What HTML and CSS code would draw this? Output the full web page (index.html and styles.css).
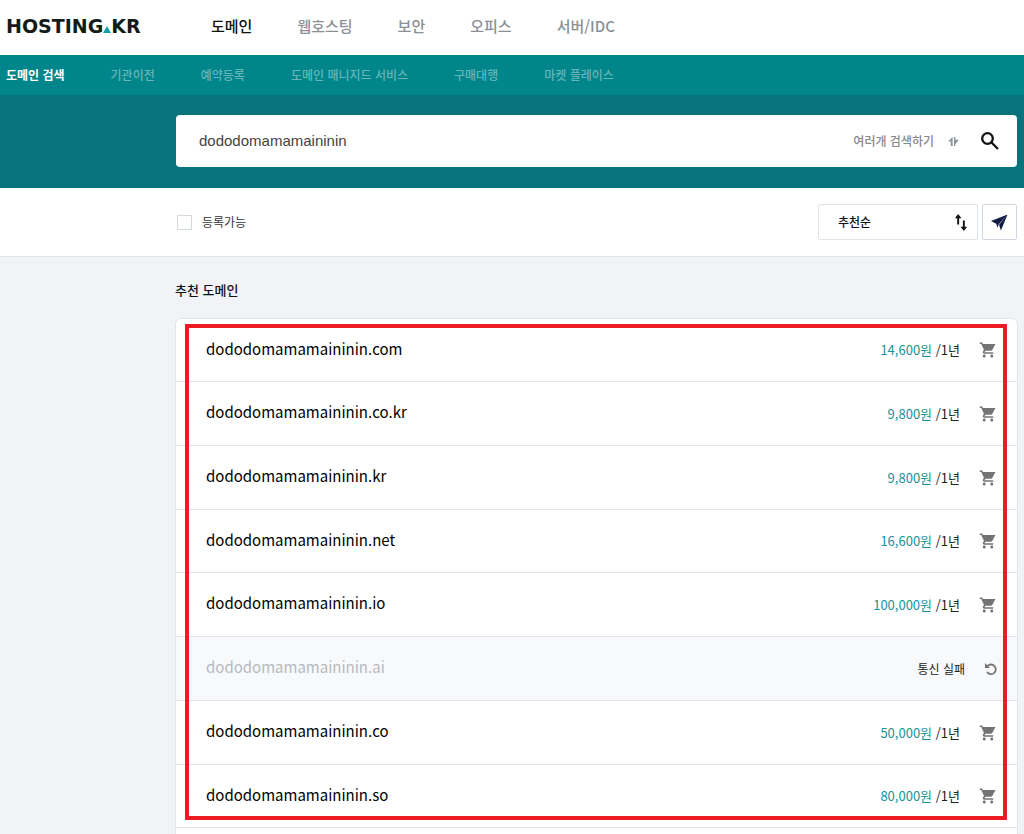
FILE: index.html
```html
<!DOCTYPE html>
<html lang="ko">
<head>
<meta charset="utf-8">
<title>HOSTING.KR</title>
<meta name="viewport" content="width=device-width, initial-scale=1">
<link rel="stylesheet" href="styles.css">
</head>
<body>
<svg class="sprite" aria-hidden="true">
  <symbol id="cart" viewBox="0 0 24 24"><path d="M7 18c-1.100 0-2 .9-2 2s.9 2 2 2 2-.9 2-2-.9-2-2-2zM1 2v2h2l3.600 7.600-1.400 2.400C4.500 15.400 5.500 17 7 17h12v-2H7.400l1.100-2h7.500c.8 0 1.400-.4 1.700-1l4.300-8H5.200l-.9-2zM17 18c-1.100 0-2 .9-2 2s.9 2 2 2 2-.9 2-2-.9-2-2-2z"/></symbol>
</svg>
<header class="header">
  <a class="logo" href="#" aria-label="HOSTING.KR"><span>HOSTING</span><svg class="logo-mark" viewBox="0 0 8 7"><path d="M4 0l4 7H0z"/></svg><span>KR</span></a>
  <nav class="main-nav">
    <a class="current" href="#">도메인</a>
    <a href="#">웹호스팅</a>
    <a href="#">보안</a>
    <a href="#">오피스</a>
    <a href="#">서버/IDC</a>
  </nav>
</header>
<nav class="sub-nav">
  <a class="current" href="#">도메인 검색</a>
  <a href="#">기관이전</a>
  <a href="#">예약등록</a>
  <a href="#">도메인 매니지드 서비스</a>
  <a href="#">구매대행</a>
  <a href="#">마켓 플레이스</a>
</nav>
<section class="search-band">
  <form class="search-box">
    <input class="search-input" type="text" aria-label="도메인 검색" value="dododomamamaininin">
    <button class="multi" type="button">여러개 검색하기
      <svg class="multi-icon" viewBox="0 0 12 10"><path d="M3 10V5H0L5 0v10zM6.500 0H8v3h4L8 8v2H6.500z"/></svg>
    </button>
    <button class="search-button" type="button" aria-label="검색">
      <svg class="search-icon" viewBox="0 0 18 18"><circle cx="6.500" cy="6.500" r="5.300"/><path d="M10.500 10.500l6.500 6.500"/></svg>
    </button>
  </form>
</section>
<section class="filters">
  <label class="check"><input type="checkbox"><span>등록가능</span></label>
  <div class="tools">
    <div class="sort">
      <select class="sort-select" aria-label="정렬"><option>추천순</option></select>
      <svg class="sort-icon" viewBox="0 0 14 18"><path class="shaft" d="M4 11V3M10 7v8"/><path d="M4 0l3.500 4.500h-7zM10 18l3.500-4.500h-7z"/></svg>
    </div>
    <button class="send" type="button" aria-label="보내기">
      <svg class="send-icon" viewBox="0 0 18 18"><path d="M17.500.5L0 7.500l5.500 2.700zM17.500.5L10.500 17.500 8.500 11.500zM17.500.5L5.500 10.200 7 14.500 8 11z"/></svg>
    </button>
  </div>
</section>
<main class="results">
  <h1 class="results-title">추천 도메인</h1>
  <div class="list-wrap">
    <ul class="list">
      <li class="row"><span class="domain">dododomamamaininin.com</span><span class="price"><b>14,600원</b> /1년</span><button class="icon-button" type="button" aria-label="장바구니"><svg class="cart"><use href="#cart"/></svg></button></li>
      <li class="row"><span class="domain">dododomamamaininin.co.kr</span><span class="price"><b>9,800원</b> /1년</span><button class="icon-button" type="button" aria-label="장바구니"><svg class="cart"><use href="#cart"/></svg></button></li>
      <li class="row"><span class="domain">dododomamamaininin.kr</span><span class="price"><b>9,800원</b> /1년</span><button class="icon-button" type="button" aria-label="장바구니"><svg class="cart"><use href="#cart"/></svg></button></li>
      <li class="row"><span class="domain">dododomamamaininin.net</span><span class="price"><b>16,600원</b> /1년</span><button class="icon-button" type="button" aria-label="장바구니"><svg class="cart"><use href="#cart"/></svg></button></li>
      <li class="row"><span class="domain">dododomamamaininin.io</span><span class="price"><b>100,000원</b> /1년</span><button class="icon-button" type="button" aria-label="장바구니"><svg class="cart"><use href="#cart"/></svg></button></li>
      <li class="row failed"><span class="domain">dododomamamaininin.ai</span><span class="status">통신 실패</span><button class="icon-button" type="button" aria-label="다시 시도"><svg class="retry" viewBox="0 0 12 12"><path class="retry-arc" d="M2.500 3A4.800 4.800 0 1 1 2 9"/><path class="retry-head" d="M0 0v5h5z"/></svg></button></li>
      <li class="row"><span class="domain">dododomamamaininin.co</span><span class="price"><b>50,000원</b> /1년</span><button class="icon-button" type="button" aria-label="장바구니"><svg class="cart"><use href="#cart"/></svg></button></li>
      <li class="row"><span class="domain">dododomamamaininin.so</span><span class="price"><b>80,000원</b> /1년</span><button class="icon-button" type="button" aria-label="장바구니"><svg class="cart"><use href="#cart"/></svg></button></li>
      <li class="row-next"></li>
    </ul>
    <div class="highlight"></div>
  </div>
</main>
</body>
</html>
```
FILE: styles.css
```css
* { box-sizing: border-box; }
body {
  margin: 0;
  background: #f1f3f7;
  color: #111;
  font-family: "Noto Sans CJK KR", sans-serif;
  font-size: 12px;
  line-height: 20px;
}
a { color: inherit; text-decoration: none; white-space: nowrap; }
button, input, select { font: inherit; color: inherit; }
button { border: 0; background: none; padding: 0; cursor: pointer; }
svg { display: block; flex: none; }
.sprite { position: absolute; width: 0; height: 0; }

.header {
  display: flex;
  align-items: center;
  height: 55px;
  padding: 0 6px 3px;
  background: #fff;
}
.logo {
  display: flex;
  align-items: baseline;
  width: 205px;
  color: #131b1b;
  font: bold 19px/20px "DejaVu Sans", sans-serif;
}
.logo-mark { width: 8px; height: 7px; fill: #14a0a5; }
.main-nav {
  display: flex;
  gap: 45px;
  color: #8b9095;
  font-size: 15px;
  font-weight: 500;
}
.main-nav .current { color: #111; }

.sub-nav {
  display: flex;
  align-items: center;
  gap: 46px;
  height: 40px;
  padding: 0 6px;
  background: #00858b;
  color: #66b6b9;
  font-weight: 500;
}
.sub-nav .current { color: #fff; font-weight: 700; }

.search-band { padding: 20px 7px 21px 176px; background: #08737b; }
.search-box {
  display: flex;
  align-items: center;
  height: 52px;
  padding: 0 18px 0 23px;
  border-radius: 4px;
  background: #fff;
}
.search-input {
  flex: 1;
  min-width: 0;
  padding: 0;
  border: 0;
  outline: 0;
  color: #444;
  font-family: "Liberation Sans", sans-serif;
  font-size: 15px;
}
.multi {
  display: flex;
  align-items: center;
  gap: 14px;
  color: #888;
  font-weight: 500;
}
.multi-icon { width: 11px; height: 9px; fill: #8a9299; }
.search-button { margin-left: 22px; }
.search-icon { width: 18px; height: 18px; fill: none; stroke: #111; stroke-width: 2.3; }

.filters {
  display: flex;
  align-items: center;
  justify-content: space-between;
  height: 69px;
  padding: 0 7px 0 177px;
  border-bottom: 1px solid #e0e3e8;
  background: #fff;
}
.check { display: flex; align-items: center; gap: 10px; color: #333; }
.check input {
  appearance: none;
  width: 15px;
  height: 15px;
  margin: 0;
  border: 1px solid #d3dade;
}
.tools { display: flex; gap: 4px; }
.sort { display: grid; align-items: center; width: 160px; }
.sort > * { grid-area: 1 / 1; }
.sort-select {
  appearance: none;
  width: 100%;
  height: 36px;
  padding: 0 19px;
  border: 1px solid #e0e3e8;
  border-radius: 2px;
  background: #fff;
  font-weight: 500;
}
.sort-icon {
  justify-self: end;
  width: 14px;
  height: 17px;
  margin-right: 10px;
  fill: #111;
  pointer-events: none;
}
.shaft { stroke: #111; stroke-width: 2; }
.send {
  display: grid;
  place-items: center;
  width: 35px;
  height: 36px;
  border: 1px solid #d0d8e2;
  border-radius: 2px;
}
.send-icon { width: 17px; height: 17px; fill: #111a42; }

.results { padding: 23px 6px 0 175px; }
.results-title { margin: 0 0 18px; font-size: 13px; font-weight: 500; line-height: 20px; }
.list-wrap { position: relative; }
.list {
  margin: 0;
  padding: 0;
  overflow: hidden;
  list-style: none;
  border: 1px solid #e2e6ec;
  border-bottom: 0;
  border-radius: 6px 6px 0 0;
  background: #fff;
}
.row {
  display: flex;
  align-items: center;
  height: 64px;
  padding: 0 20px 0 30px;
  border-bottom: 1px solid #e2e6ec;
}
.row:first-child, .row:nth-child(4n) { height: 63px; }
.domain { flex: 1; padding-bottom: 3px; color: #000; font-size: 15px; font-weight: 400; line-height: 24px; }
.price { font-size: 13px; color: #222; }
.price b { color: #16929a; font-weight: 400; }
.status { color: #222; }
.icon-button { display: grid; justify-items: end; width: 37px; }
.cart { width: 18px; height: 18px; fill: #747474; }
.failed { background: #f8f9fb; }
.failed .domain { color: #b5b9c0; }
.failed .icon-button { width: 32px; }
.retry { width: 12px; height: 12px; }
.retry-arc { fill: none; stroke: #747474; stroke-width: 1.8; }
.retry-head { fill: #747474; }
.row-next { height: 7px; }
.highlight {
  position: absolute;
  inset: 6px 11px 15px 10px;
  border: 4px solid #ed1c24;
  pointer-events: none;
}
```
